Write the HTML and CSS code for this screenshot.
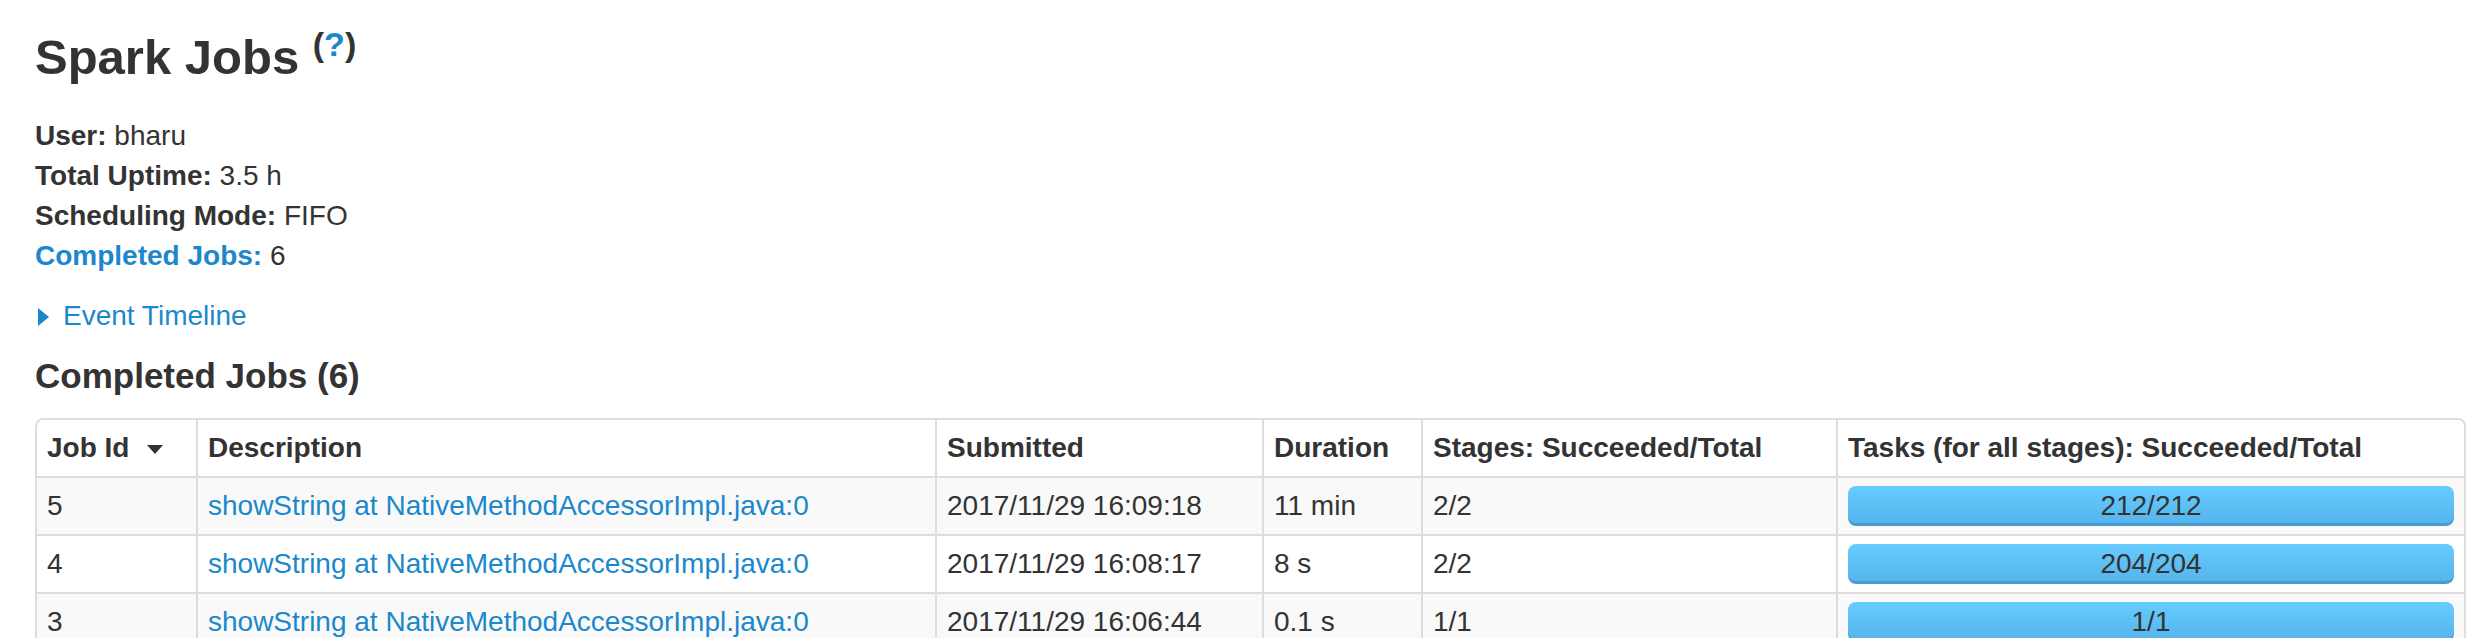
FILE: index.html
```html
<!DOCTYPE html>
<html>
<head>
<meta charset="utf-8">
<title>Spark Jobs</title>
<link rel="stylesheet" href="styles.css">
</head>
<body>
<div class="page">
  <h3 class="title">Spark Jobs <sup class="help">(<a class="link" href="#">?</a>)</sup></h3>
  <ul class="summary">
    <li><strong>User:</strong> bharu</li>
    <li><strong>Total Uptime:</strong> 3.5 h</li>
    <li><strong>Scheduling Mode:</strong> FIFO</li>
    <li><a class="link" href="#"><strong>Completed Jobs:</strong></a> 6</li>
  </ul>
  <div class="timeline"><span class="arrow-closed"></span><a class="link" href="#">Event Timeline</a></div>
  <h4 class="section">Completed Jobs (6)</h4>
  <table class="jobs">
    <thead>
      <tr>
        <th class="c1">Job Id<span class="sort"></span></th>
        <th class="c2">Description</th>
        <th class="c3">Submitted</th>
        <th class="c4">Duration</th>
        <th class="c5">Stages: Succeeded/Total</th>
        <th class="c6">Tasks (for all stages): Succeeded/Total</th>
      </tr>
    </thead>
    <tbody>
      <tr class="odd">
        <td>5</td>
        <td><a class="link" href="#">showString at NativeMethodAccessorImpl.java:0</a></td>
        <td>2017/11/29 16:09:18</td>
        <td>11 min</td>
        <td>2/2</td>
        <td><div class="progress">212/212</div></td>
      </tr>
      <tr>
        <td>4</td>
        <td><a class="link" href="#">showString at NativeMethodAccessorImpl.java:0</a></td>
        <td>2017/11/29 16:08:17</td>
        <td>8 s</td>
        <td>2/2</td>
        <td><div class="progress">204/204</div></td>
      </tr>
      <tr class="odd">
        <td>3</td>
        <td><a class="link" href="#">showString at NativeMethodAccessorImpl.java:0</a></td>
        <td>2017/11/29 16:06:44</td>
        <td>0.1 s</td>
        <td>1/1</td>
        <td><div class="progress">1/1</div></td>
      </tr>
    </tbody>
  </table>
</div>
</body>
</html>
```
FILE: styles.css
```css
html, body {
  margin: 0;
  padding: 0;
  background: #ffffff;
}
body {
  font-family: "Liberation Sans", Arial, sans-serif;
  font-size: 28px;
  line-height: 40px;
  color: #333333;
}
.page {
  padding: 0 18px 0 35px;
}
.link {
  color: #1b88cc;
  text-decoration: none;
}
.title {
  display: block;
  margin: 17px 0 19px;
  font-size: 49px;
  line-height: 80px;
  font-weight: bold;
  color: #333333;
}
.help {
  position: relative;
  top: -18px;
  font-size: 34px;
  line-height: 0;
  vertical-align: baseline;
  font-weight: bold;
}
.summary {
  list-style: none;
  margin: 0 0 20px;
  padding: 0;
}
.summary li {
  line-height: 40px;
}
.summary strong {
  font-weight: bold;
}
.timeline {
  line-height: 40px;
  display: flex;
  align-items: center;
  padding-left: 3px;
}
.arrow-closed {
  display: inline-block;
  width: 0;
  height: 0;
  border-top: 9px solid transparent;
  border-bottom: 9px solid transparent;
  border-left: 11px solid #1b88cc;
  margin-right: 14px;
  margin-top: 2px;
}
.section {
  margin: 20px 0 22px;
  font-size: 35px;
  line-height: 40px;
  font-weight: bold;
}
.jobs {
  width: 100%;
  table-layout: fixed;
  border-collapse: separate;
  border-spacing: 0;
  border: 2px solid #dddddd;
  border-left: 0;
  border-radius: 8px;
}
.jobs th, .jobs td {
  box-sizing: border-box;
  padding: 8px 10px;
  line-height: 40px;
  text-align: left;
  vertical-align: top;
  border-left: 2px solid #dddddd;
  border-top: 2px solid #dddddd;
  white-space: nowrap;
  overflow: hidden;
}
.jobs th {
  font-weight: bold;
  border-top: 0;
  background: #ffffff;
}
.jobs th.c1 { width: 161px; border-top-left-radius: 8px; }
.jobs th.c2 { width: 739px; }
.jobs th.c3 { width: 327px; }
.jobs th.c4 { width: 159px; }
.jobs th.c5 { width: 415px; }
.jobs th.c6 { border-top-right-radius: 8px; }
.jobs tr.odd td {
  background: #f9f9f9;
}
.sort {
  display: inline-block;
  width: 0;
  height: 0;
  border-left: 8px solid transparent;
  border-right: 8px solid transparent;
  border-top: 9px solid #333333;
  margin-left: 18px;
  vertical-align: middle;
}
.progress {
  height: 40px;
  line-height: 40px;
  text-align: center;
  color: #333333;
  border-radius: 8px;
  background-color: #5ec0f6;
  background-image: linear-gradient(to bottom, #66ccfe, #55b3ec);
  box-shadow: inset 0 -3px 0 rgba(0, 0, 0, 0.13);
}
```
